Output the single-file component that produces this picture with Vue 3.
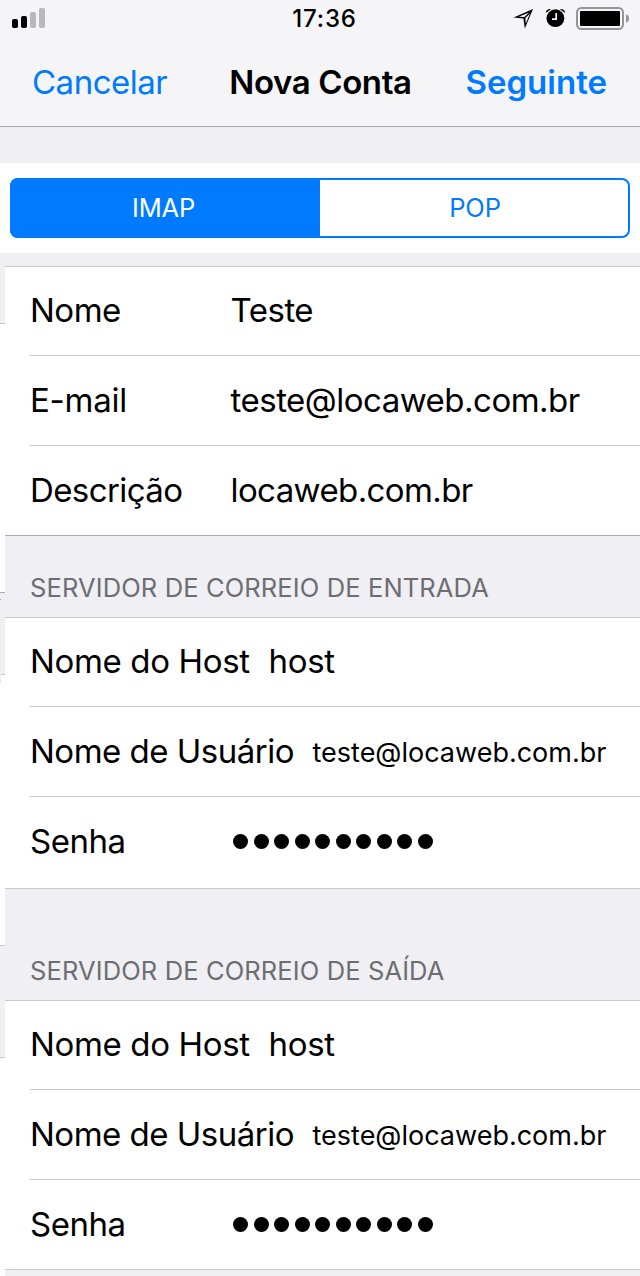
<template>
  <div class="screen">
    <header class="top">
      <div class="status-bar">
        <svg class="signal" width="34" height="20" viewBox="0 0 34 20">
          <rect x="0" y="11" width="6" height="9" rx="1.8" />
          <rect x="9" y="8" width="6" height="12" rx="1.8" />
          <rect class="off" x="18" y="4" width="6" height="16" rx="1.8" />
          <rect class="off" x="27" y="0" width="6" height="20" rx="1.8" />
        </svg>
        <span class="time">17:36</span>
        <svg class="indicators" width="117" height="24" viewBox="513 7 117 24">
          <path
            class="arrow"
            d="M513.6 17.4 533 9 524.8 28.6 523.4 18.6ZM518.8 16.8 524.4 17 529 12.6ZM525.3 17.9 525.8 23.6 530 13.4Z"
          />
          <circle cx="555.4" cy="18.2" r="8.9" />
          <path d="M545.8 13Q545.8 8.7 551.2 8.9ZM565 13Q565 8.7 559.6 8.9Z" />
          <path class="hands" d="M556.2 13V19.2H552" />
          <rect class="shell" x="577" y="8" width="46" height="21" rx="4.5" />
          <rect x="580" y="11" width="40" height="15" rx="1" />
          <path class="cap" d="M626 14.2Q629 15.3 629 18.5T626 22.8Z" />
        </svg>
      </div>
      <nav class="nav-bar">
        <a class="cancel">Cancelar</a>
        <h1>Nova Conta</h1>
        <a class="next">Seguinte</a>
      </nav>
    </header>

    <div class="protocol">
      <div class="segmented">
        <button
          v-for="item in protocols"
          :key="item"
          :class="{ active: item === protocol }"
          @click="protocol = item"
        >
          {{ item }}
        </button>
      </div>
    </div>

    <main class="form">
      <!-- edge of the previous page, still visible on the left -->
      <div class="edge">
        <i class="edge-gap first"></i>
        <i class="edge-gap second"></i>
        <i class="edge-gap third"></i>
      </div>
      <div class="groups">
        <section v-for="group in groups" :key="group.id" :class="['group', group.id]">
          <h2 v-if="group.title">{{ group.title }}</h2>
          <div class="rows">
            <div v-for="row in group.rows" :key="row.label" :class="['row', row.kind]">
              <span class="label">{{ row.label }}</span>
              <span v-if="row.kind === 'password'" class="dots">
                <i v-for="n in 10" :key="n"></i>
              </span>
              <span v-else class="value">{{ row.value }}</span>
            </div>
          </div>
        </section>
      </div>
    </main>
  </div>
</template>

<script setup>
import { ref } from 'vue'

const protocols = ['IMAP', 'POP']
const protocol = ref('IMAP')

const serverRows = [
  { label: 'Nome do Host', value: 'host', kind: 'host' },
  { label: 'Nome de Usuário', value: 'teste@locaweb.com.br', kind: 'user' },
  { label: 'Senha', kind: 'password' },
]

const groups = [
  {
    id: 'account',
    rows: [
      { label: 'Nome', value: 'Teste', kind: 'name' },
      { label: 'E-mail', value: 'teste@locaweb.com.br', kind: 'email' },
      { label: 'Descrição', value: 'locaweb.com.br', kind: 'description' },
    ],
  },
  { id: 'incoming', title: 'SERVIDOR DE CORREIO DE ENTRADA', rows: serverRows },
  { id: 'outgoing', title: 'SERVIDOR DE CORREIO DE SAÍDA', rows: serverRows },
]
</script>

<style>
body {
  margin: 0;
}
</style>

<style scoped>
.screen {
  box-sizing: border-box;
  width: 640px;
  height: 1276px;
  overflow: hidden;
  background: #efeff4;
  color: #000000;
  font-family: Inter, "Liberation Sans", sans-serif;
}

.top {
  box-sizing: border-box;
  height: 127px;
  background: #f5f5f7;
  border-bottom: 1px solid #a9a9ad;
}

.status-bar {
  display: grid;
  grid-template-columns: 1fr auto 1fr;
  height: 38px;
  padding: 0 10px 0 16px;
}

.signal {
  margin: 8px 0 0 -4px;
}

.signal .off {
  fill: #b9b9bb;
}

.time {
  padding-left: 3px;
  font-size: 24px;
  font-weight: 500;
  letter-spacing: 0.8px;
  line-height: 38px;
}

.indicators {
  justify-self: end;
  margin-top: 7px;
}

.arrow {
  fill-rule: evenodd;
}

.hands {
  fill: none;
  stroke: #f5f5f7;
  stroke-width: 1.7;
}

.shell {
  fill: none;
  stroke: #959597;
  stroke-width: 2;
}

.cap {
  fill: #959597;
}

.nav-bar {
  display: grid;
  grid-template-columns: 1fr auto 1fr;
  height: 88px;
  padding: 0 33px 0 32px;
  font-size: 33px;
  line-height: 88px;
}

.nav-bar a {
  color: #007aff;
}

.nav-bar .cancel {
  letter-spacing: -0.5px;
}

.nav-bar h1 {
  margin: 0;
  padding-left: 2px;
  font-size: 33px;
  font-weight: 600;
  letter-spacing: -0.4px;
}

.nav-bar .next {
  justify-self: end;
  font-weight: 600;
}

.protocol {
  box-sizing: border-box;
  height: 90px;
  margin-top: 36px;
  padding: 15px 10px;
  background: #ffffff;
}

.segmented {
  box-sizing: border-box;
  display: grid;
  grid-template-columns: 1fr 1fr;
  height: 60px;
  border: 2px solid #007aff;
  border-radius: 8px;
}

.segmented button {
  padding: 0 0 0 2px;
  background: none;
  border: 0;
  color: #007aff;
  font: 400 25.5px/56px Inter, "Liberation Sans", sans-serif;
  letter-spacing: -0.2px;
}

.segmented button.active {
  margin: -2px;
  padding: 0 4px 0 0;
  background: #007aff;
  color: #ffffff;
}

.segmented button.active:first-child {
  margin-right: 0;
  padding-right: 3px;
  border-radius: 8px 0 0 8px;
}

.segmented button.active:last-child {
  margin-left: 0;
  border-radius: 0 8px 8px 0;
}

.form {
  display: flex;
  height: 1023px;
}

.edge {
  flex: 0 0 5px;
  background: #ffffff;
}

.edge-gap {
  box-sizing: border-box;
  display: block;
  background: #efeff4;
  border-bottom: 1px solid #c8c7cc;
}

.edge-gap.first {
  height: 71px;
}

.edge-gap.second {
  position: relative;
  height: 83px;
  margin-top: 268px;
  border-top: 1px solid #a9a9ad;
}

/* the outermost pixel column repeats both lines 7px lower */
.edge-gap.second::before,
.edge-gap.second::after {
  content: "";
  position: absolute;
  left: 0;
  width: 1px;
}

.edge-gap.second::before {
  top: 6px;
  height: 1px;
  background: #a9a9ad;
}

.edge-gap.second::after {
  bottom: -8px;
  height: 7px;
  background: #efeff4;
  border-bottom: 1px solid #c8c7cc;
}

.edge-gap.third {
  height: 113px;
  margin-top: 270px;
  border-top: 1px solid #c8c7cc;
}

.groups {
  flex: 1;
  padding-top: 13px;
}

.group h2 {
  box-sizing: border-box;
  height: 81px;
  margin: 0;
  padding: 36px 0 0 25px;
  color: #6d6d72;
  font-size: 25.5px;
  font-weight: 400;
  letter-spacing: 0.12px;
  line-height: 31px;
}

.outgoing h2 {
  height: 111px;
  padding-top: 66px;
}

.rows {
  background: #ffffff;
  border-top: 1px solid #c8c7cc;
  border-bottom: 1px solid #c8c7cc;
}

.account .rows {
  border-bottom-color: #a9a9ad;
}

.row {
  box-sizing: border-box;
  display: flex;
  align-items: center;
  height: 90px;
  margin-left: 25px;
  border-bottom: 1px solid #c8c7cc;
  font-size: 33px;
  letter-spacing: -0.5px;
  line-height: 40px;
  white-space: nowrap;
}

.row:first-child {
  height: 89px;
}

.row:last-child {
  height: 89px;
  border-bottom: 0;
}

.incoming .row:last-child {
  height: 91px;
  padding-bottom: 2px;
}

.label,
.value {
  padding-bottom: 2px;
}

.label {
  flex: 0 0 200px;
}

.value {
  padding-left: 0.5px;
}

.email .label {
  letter-spacing: -0.25px;
}

.description .label,
.description .value {
  letter-spacing: -0.6px;
}

.host .label {
  flex-basis: 238px;
  letter-spacing: -0.35px;
}

.host .value {
  letter-spacing: -0.3px;
}

.user .label {
  flex-basis: 282px;
}

.user .value {
  padding: 2px 0 0 0.5px;
  font-size: 27px;
  letter-spacing: 0;
}

.dots {
  display: flex;
  gap: 5.5px;
  padding-left: 3px;
}

.dots i {
  width: 15px;
  height: 15px;
  background: #000000;
  border-radius: 50%;
}
</style>
